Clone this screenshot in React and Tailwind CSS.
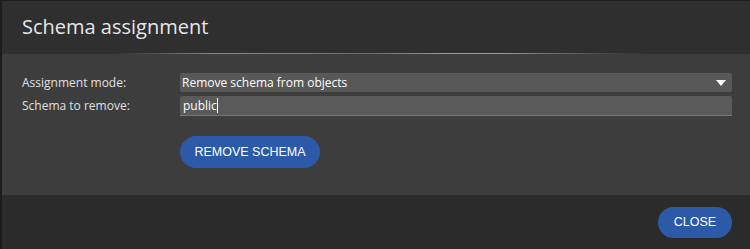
import React from 'react';

const App = () => {
  return (
    <div className="w-[750px] h-[249px] bg-[#1c1c1c] pl-[2px] pt-[1px]" style={{ fontFamily: '"Open Sans", sans-serif' }}>
      <div className="h-full flex flex-col">
        <div className="h-[52px] bg-[#2f2f2f] flex items-center px-5">
          <h2 className="text-[20px] text-[#e6e6e6] leading-none">Schema assignment</h2>
        </div>
        <div className="h-px bg-[linear-gradient(to_right,#2f2f2f_15%,#4caf50_28%,#e0507a_39%,#e03a2a_49%,#e8902a_60%,#a89a7a_67%,#3c7ad8_73%,#2f2f2f_86%)]" />
        <div className="flex-1 bg-[#3d3d3d] pl-5 pr-[18px] pt-[19px]">
          <div className="flex items-center h-[19px]">
            <label className="w-[158px] text-[12px] text-[#e0e0e0]">Assignment mode:</label>
            <div className="flex-1 h-full bg-[#585858] rounded-[2px] flex items-center justify-between pl-[2px] pr-[6px]">
              <span className="text-[12px] text-white">Remove schema from objects</span>
              <svg width="10" height="6" viewBox="0 0 10 6"><path d="M0 0h10L5 6z" fill="#fff" /></svg>
            </div>
          </div>
          <div className="flex items-center h-[20px] mt-[4px]">
            <label className="w-[158px] text-[12px] text-[#e0e0e0]">Schema to remove:</label>
            <div className="flex-1 h-full bg-[#5a5a5a] rounded-t-[2px] border-b border-[#3b80e6] flex items-center pl-[3px]">
              <span className="text-[12px] text-white">public</span>
              <span className="w-px h-[15px] bg-white" />
            </div>
          </div>
          <div className="pl-[158px] mt-[20px]">
            <button className="h-[32px] w-[140px] rounded-full bg-[#2c5aa8] text-white text-[12.5px]" style={{ fontFamily: '"Liberation Sans", Arial, sans-serif' }}>
              REMOVE SCHEMA
            </button>
          </div>
        </div>
        <div className="h-[54px] bg-[#2b2b2b] flex items-center justify-end pr-[18px]">
          <button className="h-[31px] w-[74px] rounded-full bg-[#2c5aa8] text-white text-[12.5px]" style={{ fontFamily: '"Liberation Sans", Arial, sans-serif' }}>
            CLOSE
          </button>
        </div>
      </div>
    </div>
  );
};

export default App;
